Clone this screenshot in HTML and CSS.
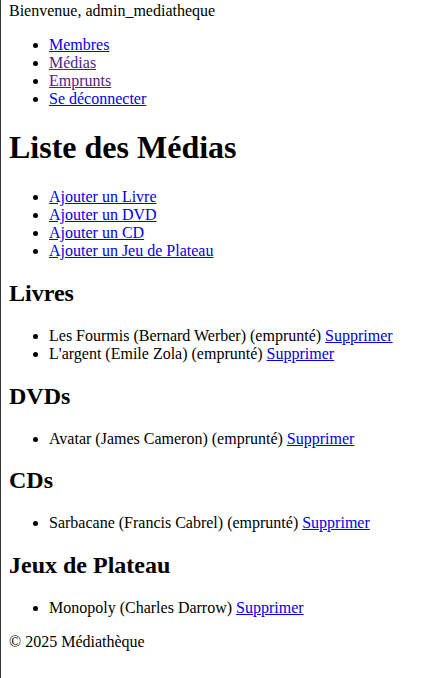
FILE: index.html
```html
<!DOCTYPE html>
<html lang="fr">
<head>
<meta charset="utf-8">
<title>Médiathèque</title>
<link rel="stylesheet" href="styles.css">
</head>
<body>
<header>
<div class="welcome">Bienvenue, admin_mediatheque</div>
<nav>
<ul>
<li><a href="#membres">Membres</a></li>
<li><a href="#medias" class="visited">Médias</a></li>
<li><a href="#emprunts" class="visited">Emprunts</a></li>
<li><a href="#logout">Se déconnecter</a></li>
</ul>
</nav>
</header>
<main>
<h1>Liste des Médias</h1>
<ul>
<li><a href="#livre">Ajouter un Livre</a></li>
<li><a href="#dvd">Ajouter un DVD</a></li>
<li><a href="#cd">Ajouter un CD</a></li>
<li><a href="#jeu">Ajouter un Jeu de Plateau</a></li>
</ul>
<h2>Livres</h2>
<ul>
<li>Les Fourmis (Bernard Werber) (emprunté) <a href="#s1">Supprimer</a></li>
<li>L'argent (Emile Zola) (emprunté) <a href="#s2">Supprimer</a></li>
</ul>
<h2>DVDs</h2>
<ul>
<li>Avatar (James Cameron) (emprunté) <a href="#s3">Supprimer</a></li>
</ul>
<h2>CDs</h2>
<ul>
<li>Sarbacane (Francis Cabrel) (emprunté) <a href="#s4">Supprimer</a></li>
</ul>
<h2>Jeux de Plateau</h2>
<ul>
<li>Monopoly (Charles Darrow) <a href="#s5">Supprimer</a></li>
</ul>
</main>
<footer>
<p>© 2025 Médiathèque</p>
</footer>
</body>
</html>
```
FILE: styles.css
```css
html {
  border-left: 1px solid #333;
  min-height: 100%;
}
body {
  margin: 2px 8px 8px;
  font-family: "Liberation Serif", "Times New Roman", serif;
  color: #000;
  background: #fff;
}
a {
  color: #0000ee;
}
a.visited {
  color: #551a8b;
}
```
